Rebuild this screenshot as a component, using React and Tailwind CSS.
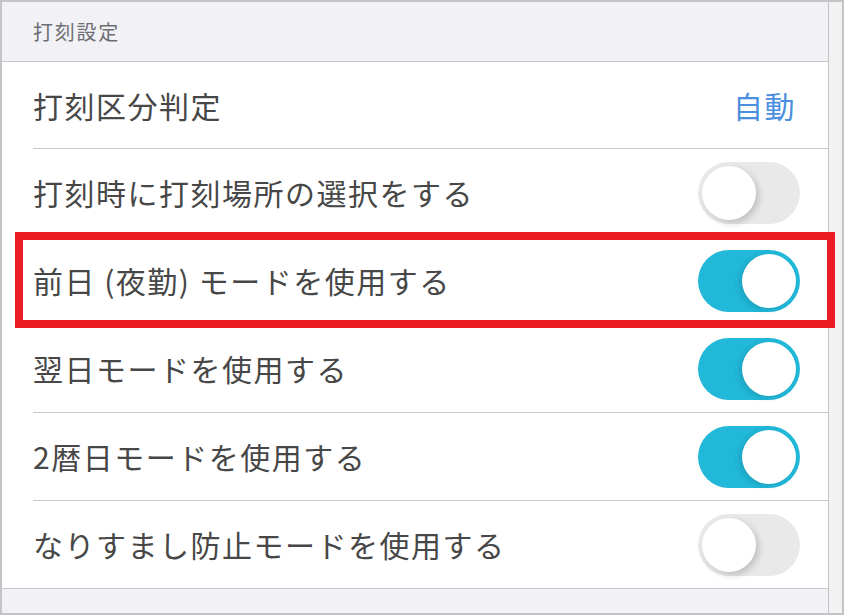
import React from "react";

const ROWS = [
  { label: "打刻時に打刻場所の選択をする", on: false },
  { label: "前日 (夜勤) モードを使用する", on: true },
  { label: "翌日モードを使用する", on: true },
  { label: "2暦日モードを使用する", on: true },
  { label: "なりすまし防止モードを使用する", on: false, last: true },
];

function Toggle({ on }) {
  return (
    <div
      className={
        "relative w-[102px] h-[62px] rounded-full shrink-0 " +
        (on ? "bg-[#21b8d9]" : "bg-[#e9e9ea]")
      }
    >
      <div
        className={
          "absolute top-[4px] w-[54px] h-[54px] rounded-full bg-white " +
          (on
            ? "right-[4px] shadow-[-3px_2px_6px_rgba(0,0,0,0.12)]"
            : "left-[4px] shadow-[3px_3px_7px_rgba(0,0,0,0.18)]")
        }
      />
    </div>
  );
}

export default function App() {
  return (
    <div
      className="w-[844px] h-[615px] border-2 border-[#c4c4c6] bg-[#f1f1f6] flex text-[#474747]"
      style={{ fontFamily: '"Noto Sans CJK JP", "Noto Sans", sans-serif' }}
    >
      <div className="relative flex-1 flex flex-col">
        {/* section header */}
        <div className="h-[60px] border-b border-[#c8c7cc] flex items-center pl-[31px]">
          <span className="text-[20px] tracking-[1.75px] text-[#6d6d72]">打刻設定</span>
        </div>

        <div className="bg-white">
          <div className="pl-[31px]">
            <div className="h-[87px] border-b border-[#c8c7cc] flex items-center justify-between pr-[32px]">
              <span className="text-[30px] tracking-[1.5px]">打刻区分判定</span>
              <span className="text-[30px] tracking-[1.5px] text-[#4a8fe0]">自動</span>
            </div>
          </div>
          {ROWS.map((row) => (
            <div key={row.label} className={row.last ? "" : "pl-[31px]"}>
              <div
                className={
                  "h-[88px] border-b border-[#c8c7cc] flex items-center justify-between pr-[28px] " +
                  (row.last ? "pl-[31px]" : "")
                }
              >
                <span className="text-[30px] tracking-[1.5px]">{row.label}</span>
                <Toggle on={row.on} />
              </div>
            </div>
          ))}
        </div>

        {/* highlight */}
        <div className="absolute left-[13px] top-[230px] w-[820px] h-[96px] border-[8px] border-[#ec1c24]" />
      </div>

      {/* scrollbar track */}
      <div className="w-[14px] border-l border-[#c4c4c6] bg-[#f2f2f3]" />
    </div>
  );
}
